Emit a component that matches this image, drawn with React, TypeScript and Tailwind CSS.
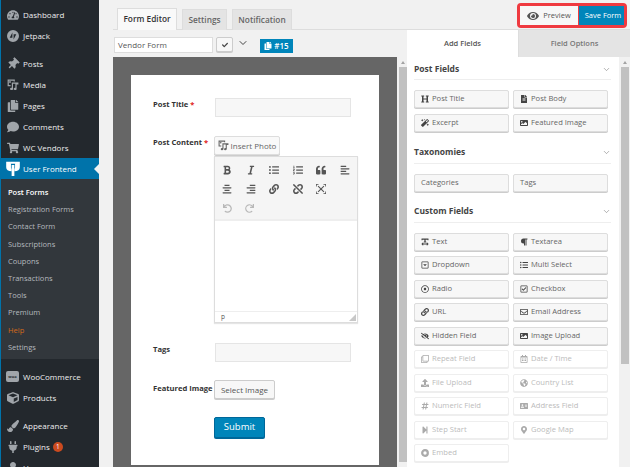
import React from 'react';
import { ChevronDown } from 'lucide-react';
import {
  FaTachometerAlt, FaThumbtack, FaCopy, FaComment, FaShoppingCart, FaCube, FaPaintBrush, FaPlug, FaUser,
  FaHeading, FaFileAlt, FaImage, FaParagraph, FaRegCaretSquareDown, FaListUl, FaRegDotCircle, FaRegCheckSquare, FaLink,
  FaRegEnvelope, FaEyeSlash, FaEye, FaRegClone, FaRegCalendarAlt, FaUpload, FaGlobeAmericas, FaHashtag, FaAddressCard,
  FaStepForward, FaMapMarkerAlt, FaBold, FaItalic, FaListOl, FaQuoteLeft, FaAlignLeft, FaAlignCenter, FaAlignRight,
  FaUnlink, FaUndo, FaRedo, FaCheck, FaTextWidth, FaMagic,
} from 'react-icons/fa';

const font = { fontFamily: '"Open Sans", sans-serif' };

type IconType = React.ComponentType<{ size?: number; className?: string }>;

const JetpackIcon: IconType = ({ size = 11, className }) => (
  <svg width={size} height={size} viewBox="0 0 20 20" className={className} fill="currentColor">
    <path fillRule="evenodd" d="M10 0a10 10 0 1 0 0 20 10 10 0 0 0 0-20ZM9 4v9H4.500L9 4Zm2 12V7h4.500L11 16Z" />
  </svg>
);

const WooIcon: IconType = ({ className }) => (
  <span className={`flex h-[11px] w-[13px] items-center justify-center rounded-[2px] bg-[#a0a5aa] text-[4px] font-bold text-[#23282d] ${className ?? ''}`}>woo</span>
);

const PinIcon: IconType = ({ size = 12, className }) => <FaThumbtack size={size} className={`rotate-45 ${className ?? ''}`} />;

const MediaIcon: IconType = ({ size = 12, className }) => (
  <svg width={size} height={size} viewBox="0 0 20 20" className={className} fill="currentColor">
    <path fillRule="evenodd" d="M1 1h12v3h-2V3H3v7h3v2H1V1Zm4 2.500a1.500 1.500 0 1 1 0 3 1.500 1.500 0 0 1 0-3Z" />
    <path d="M8 6h11v3h-3v7.500a2.500 2 0 1 1-2-2V8h-4v8.500a2.500 2 0 1 1-2-2V6Z" />
  </svg>
);

const FrontendLogo: IconType = ({ className }) => (
  <svg width="14" height="15" viewBox="0 0 20 22" className={className} fill="white">
    <path d="M0 1h7v8c0 1.500.5 2 1 2.500V15C3 15 0 12.500 0 9V1Z" />
    <path d="M13 1h7v8c0 3.500-3 6-8 6v-3.500c.5-.5 1-1 1-2.500V1Z" />
    <path d="M7 1h6v3H7ZM8 6h4v16H8Z" />
  </svg>
);

const FullscreenIcon: IconType = ({ size = 11, className }) => (
  <svg width={size} height={size} viewBox="0 0 12 12" className={className} fill="none" stroke="currentColor" strokeWidth="1.300">
    <path d="M2.500 2.500 9.500 9.500M9.500 2.500 2.500 9.500" />
    <path d="M0 3V0h3M9 0h3v3M12 9v3H9M3 12H0V9" strokeWidth="1.800" />
  </svg>
);

const TextIcon: IconType = ({ size = 9, className }) => <FaTextWidth size={size} className={className} />;

const EmbedIcon: IconType = ({ size = 9, className }) => (
  <svg width={size} height={size} viewBox="0 0 10 10" className={className} fill="none" stroke="currentColor" strokeWidth="2.800">
    <circle cx="5" cy="5" r="3.500" />
  </svg>
);

function MenuItem({ icon: Icon, label, size = 12, badge }: { icon: IconType; label: string; size?: number; badge?: string }) {
  return (
    <div className="flex h-[21px] shrink-0 items-center text-[8px] text-[#eeeeee]">
      <span className="flex w-[22px] shrink-0 justify-center pl-[1px] text-[#a0a5aa]"><Icon size={size} /></span>
      <span>{label}</span>
      {badge && (
        <span className="ml-[3px] flex h-[10px] w-[10px] items-center justify-center rounded-full bg-[#ca4a1f] text-[6.500px] text-white">{badge}</span>
      )}
    </div>
  );
}

function Sidebar() {
  const subs = ['Registration Forms', 'Contact Form', 'Subscriptions', 'Coupons', 'Transactions', 'Tools', 'Premium'];
  return (
    <div className="flex h-[467px] w-[99px] shrink-0 flex-col overflow-hidden border-l border-[#0073aa] bg-[#23282d]">
      <div className="shrink-0 pt-[4px]">
        <MenuItem icon={FaTachometerAlt} label="Dashboard" />
        <MenuItem icon={JetpackIcon} label="Jetpack" />
      </div>
      <div className="shrink-0 pt-[7px]">
        <MenuItem icon={PinIcon} label="Posts" />
        <MenuItem icon={MediaIcon} label="Media" />
        <MenuItem icon={FaCopy} label="Pages" />
        <MenuItem icon={FaComment} label="Comments" />
        <MenuItem icon={FaShoppingCart} label="WC Vendors" />
      </div>
      <div className="flex h-[21px] shrink-0 items-center justify-between bg-[#0073aa] text-[8px] text-white">
        <div className="flex items-center">
          <span className="flex w-[22px] justify-center pl-[1px]"><FrontendLogo /></span>
          <span>User Frontend</span>
        </div>
        <span className="h-0 w-0 border-y-[5px] border-r-[5px] border-y-transparent border-r-[#f1f1f1]" />
      </div>
      <div className="flex h-[180px] shrink-0 flex-col bg-[#32373c] pl-[7px] pt-[5px] text-[7.500px] leading-[17.200px] text-[#b4b9be]">
        <div className="font-semibold text-white">Post Forms</div>
        {subs.map(s => <div key={s}>{s}</div>)}
        <div className="text-[#d4691a]">Help</div>
        <div>Settings</div>
      </div>
      <div className="shrink-0 pt-[7px]">
        <MenuItem icon={WooIcon} label="WooCommerce" />
        <MenuItem icon={FaCube} label="Products" />
      </div>
      <div className="shrink-0 pt-[7px]">
        <MenuItem icon={FaPaintBrush} label="Appearance" />
        <MenuItem icon={FaPlug} label="Plugins" badge="1" />
        <MenuItem icon={FaUser} label="Users" />
      </div>
    </div>
  );
}

function Tab({ label, active, className }: { label: string; active?: boolean; className: string }) {
  return (
    <div className={`flex h-[21px] items-center justify-center border border-b-0 border-[#dddddd] text-[8.300px] font-semibold ${active ? 'h-[22px] bg-[#f9f9f9] text-[#333333]' : 'bg-[#e4e4e4] text-[#666666]'} ${className}`}>
      {label}
    </div>
  );
}

function TopBar() {
  return (
    <div className="flex h-[30px] shrink-0 items-start justify-between border-b border-[#dddddd] pr-[3px]">
      <div className="flex items-end gap-[5px] pl-[4px] pt-[8px]">
        <Tab label="Form Editor" active className="w-[60px]" />
        <Tab label="Settings" className="w-[45px]" />
        <Tab label="Notification" className="w-[60px]" />
      </div>
      <div className="mt-[3px] flex h-[25px] w-[110px] items-center rounded-[4px] border-[3px] border-[#ef3a40] bg-[#ef3a40]">
        <div className="flex h-full w-[58px] items-center justify-center gap-[4px] bg-[#f7f7f7] text-[7.500px] text-[#555555]">
          <FaEye size={12} />
          <span>Preview</span>
        </div>
        <div className="ml-[1px] flex h-full flex-1 items-center justify-center bg-[#0085ba] pl-[3px] text-[7.500px] text-white">Save Form</div>
      </div>
    </div>
  );
}

function Scrollbar({ thumb }: { thumb: number }) {
  return (
    <div className="flex w-[10px] shrink-0 flex-col items-end bg-[#f1f1f1]">
      <div className="flex h-[10px] w-[8px] items-center justify-center">
        <span className="h-0 w-0 border-x-[2.500px] border-b-[3px] border-x-transparent border-b-[#a3a3a3]" />
      </div>
      <div className="w-[8px] bg-[#c1c1c1]" style={{ height: thumb }} />
    </div>
  );
}

const toolbarIcons: { Icon: IconType }[] = [
  { Icon: FaBold }, { Icon: FaItalic }, { Icon: FaListUl }, { Icon: FaListOl }, { Icon: FaQuoteLeft }, { Icon: FaAlignLeft },
  { Icon: FaAlignCenter }, { Icon: FaAlignRight }, { Icon: FaLink }, { Icon: FaUnlink }, { Icon: FullscreenIcon },
];

function Editor() {
  return (
    <div className="ml-[-1px] mt-[1px] flex h-[167px] w-[144px] flex-col border border-[#dddddd] shadow-[0_1px_1px_rgba(0,0,0,.1)]">
      <div className="h-[64px] border-b-2 border-[#eeeeee] bg-[#f5f5f5] pl-[1px] pt-[3px]">
        <div className="grid grid-cols-6 text-[#555555]">
          {toolbarIcons.map(({ Icon }, i) => (
            <span key={i} className="flex h-[19px] w-[22px] items-center justify-center"><Icon size={10} /></span>
          ))}
        </div>
        <div className="mt-[1px] flex text-[#b8b8b8]">
          <span className="flex h-[19px] w-[22px] items-center justify-center"><FaUndo size={9} /></span>
          <span className="flex h-[19px] w-[22px] items-center justify-center"><FaRedo size={9} /></span>
        </div>
      </div>
      <div className="flex-1 bg-white" />
      <div className="flex h-[11px] items-center justify-between border-t border-[#eeeeee] pl-[6px] pr-[1px] text-[6.500px] text-[#555555]">
        <span>p</span>
        <svg width="7" height="7" viewBox="0 0 7 7"><path d="M7 0v7H0Z" fill="#c8c8c8" /></svg>
      </div>
    </div>
  );
}

function FieldLabel({ children, required }: { children: string; required?: boolean }) {
  return (
    <div className="w-[62px] shrink-0 whitespace-nowrap text-[7.600px] font-bold leading-[12px] text-[#333333]">
      {children}{required && <span className="text-[#e02020]"> *</span>}
    </div>
  );
}

function FormCanvas() {
  return (
    <div className="flex flex-1 bg-[#666666] pl-[18px] pt-[18px]">
      <div className="flex h-[390px] w-[248px] flex-col bg-white pl-[22px] pr-[21px] text-[#333333]">
        <div className="mt-[23px] flex">
          <FieldLabel required>Post Title</FieldLabel>
          <div className="h-[19px] w-[136px] border border-[#e5e5e5] bg-[#f7f7f7]" />
        </div>
        <div className="mt-[19px] flex">
          <FieldLabel required>Post Content</FieldLabel>
          <div className="flex flex-col">
            <div className="ml-[-1px] flex h-[19px] w-[66px] items-center justify-center gap-[2px] rounded-[2px] border border-[#dddddd] bg-[#f9f9f9] text-[8px] text-[#666666] shadow-[0_1px_0_#cccccc]">
              <MediaIcon size={11} />
              <span>Insert Photo</span>
            </div>
            <Editor />
          </div>
        </div>
        <div className="mt-[20px] flex">
          <FieldLabel>Tags</FieldLabel>
          <div className="h-[19px] w-[136px] border border-[#e5e5e5] bg-[#f7f7f7]" />
        </div>
        <div className="mt-[18px] flex">
          <div className="pt-[2px]"><FieldLabel>Featured Image</FieldLabel></div>
          <div className="ml-[-1px] flex h-[19px] w-[61px] items-center justify-center rounded-[2px] border border-[#cccccc] bg-[#f7f7f7] text-[8px] text-[#555555] shadow-[0_1px_0_#cccccc]">Select Image</div>
        </div>
        <div className="ml-[61px] mt-[18px] flex h-[21px] w-[51px] items-center justify-center rounded-[2px] border border-[#006799] bg-[#0085ba] text-[9.500px] text-white shadow-[0_1px_0_#006799]">Submit</div>
      </div>
    </div>
  );
}

function EditorColumn() {
  return (
    <div className="flex w-[294px] shrink-0 flex-col">
      <div className="flex h-[27px] shrink-0 items-start gap-[3px] pl-[1px] pt-[7px]">
        <div className="flex h-[16px] w-[99px] items-center border border-[#dddddd] bg-white pl-[3px] text-[8px] text-[#555555]">Vendor Form</div>
        <div className="flex h-[15px] w-[17px] items-center justify-center rounded-[2px] border border-[#cccccc] bg-[#f7f7f7] text-[#444444] shadow-[0_1px_0_#cccccc]"><FaCheck size={6} /></div>
        <div className="ml-[1px] text-[#444444]"><ChevronDown size={12} strokeWidth={2} /></div>
        <div className="ml-[8px] mt-[2px] flex h-[14px] w-[33px] items-center justify-center gap-[2px] bg-[#0085ba] text-[8px] font-semibold text-white">
          <FaCopy size={8} />
          <span>#15</span>
        </div>
      </div>
      <div className="flex min-h-0 flex-1">
        <FormCanvas />
        <Scrollbar thumb={395} />
      </div>
    </div>
  );
}

type Field = { label: string; Icon?: IconType; size?: number };

function FieldButton({ label, Icon, size = 8, disabled }: Field & { disabled?: boolean }) {
  return (
    <div className={`flex h-[18px] w-[95px] items-center gap-[3px] rounded-[2px] border pl-[6px] text-[7.600px] ${disabled ? 'border-[#eeeeee] bg-white text-[#bbbbbb] shadow-[0_1px_0_#eeeeee]' : 'border-[#dddddd] bg-[#f7f7f7] text-[#666666] shadow-[0_1px_0_#cccccc]'}`}>
      {Icon && <Icon size={size} className={disabled ? 'text-[#aaaaaa]' : 'text-[#444444]'} />}
      <span>{label}</span>
    </div>
  );
}

function FieldSection({ title, fields, disabled = [], marginTop }: { title: string; fields: Field[]; disabled?: Field[]; marginTop: string }) {
  return (
    <div className={marginTop}>
      <div className="flex h-[18px] items-center justify-between border-b border-[#eeeeee] pb-[3px]">
        <span className="text-[8.500px] font-bold text-[#444444]">{title}</span>
        <ChevronDown size={9} strokeWidth={1.500} className="text-[#777777]" />
      </div>
      <div className="mt-[10px] grid grid-cols-[95px_95px] gap-x-[4px] gap-y-[5.500px]">
        {fields.map(f => <FieldButton key={f.label} {...f} />)}
        {disabled.map(f => <FieldButton key={f.label} {...f} disabled />)}
      </div>
    </div>
  );
}

function FieldsColumn() {
  return (
    <div className="flex min-w-0 flex-1 flex-col">
      <div className="flex h-[27px] shrink-0 text-[7.500px] font-semibold">
        <div className="flex w-[111px] items-center justify-center bg-white text-[#555555]">Add Fields</div>
        <div className="flex flex-1 items-center justify-center border-l border-[#dddddd] bg-[#e4e4e4] text-[#777777]">Field Options</div>
      </div>
      <div className="flex min-h-0 flex-1">
        <div className="w-[212px] shrink-0 overflow-hidden bg-white pl-[7px] pr-[8px] pt-[5px]">
          <FieldSection
            title="Post Fields"
            marginTop="mt-0"
            fields={[
              { label: 'Post Title', Icon: FaHeading },
              { label: 'Post Body', Icon: FaFileAlt },
              { label: 'Excerpt', Icon: FaMagic },
              { label: 'Featured Image', Icon: FaImage },
            ]}
          />
          <FieldSection title="Taxonomies" marginTop="mt-[14px]" fields={[{ label: 'Categories' }, { label: 'Tags' }]} />
          <FieldSection
            title="Custom Fields"
            marginTop="mt-[13px]"
            fields={[
              { label: 'Text', Icon: TextIcon },
              { label: 'Textarea', Icon: FaParagraph },
              { label: 'Dropdown', Icon: FaRegCaretSquareDown },
              { label: 'Multi Select', Icon: FaListUl },
              { label: 'Radio', Icon: FaRegDotCircle },
              { label: 'Checkbox', Icon: FaRegCheckSquare },
              { label: 'URL', Icon: FaLink },
              { label: 'Email Address', Icon: FaRegEnvelope },
              { label: 'Hidden Field', Icon: FaEyeSlash },
              { label: 'Image Upload', Icon: FaImage },
            ]}
            disabled={[
              { label: 'Repeat Field', Icon: FaRegClone },
              { label: 'Date / Time', Icon: FaRegCalendarAlt },
              { label: 'File Upload', Icon: FaUpload },
              { label: 'Country List', Icon: FaGlobeAmericas },
              { label: 'Numeric Field', Icon: FaHashtag },
              { label: 'Address Field', Icon: FaAddressCard },
              { label: 'Step Start', Icon: FaStepForward },
              { label: 'Google Map', Icon: FaMapMarkerAlt },
              { label: 'Embed', Icon: EmbedIcon },
            ]}
          />
        </div>
        <div className="flex w-[11px] flex-col bg-[#f1f1f1] pr-[3px]">
          <Scrollbar thumb={297} />
        </div>
      </div>
    </div>
  );
}

export default function App() {
  return (
    <div style={font} className="flex h-[467px] w-[630px] overflow-hidden bg-[#f1f1f1]">
      <Sidebar />
      <div className="flex min-w-0 flex-1 flex-col pl-[14px]">
        <TopBar />
        <div className="flex min-h-0 flex-1">
          <EditorColumn />
          <FieldsColumn />
        </div>
      </div>
    </div>
  );
}
